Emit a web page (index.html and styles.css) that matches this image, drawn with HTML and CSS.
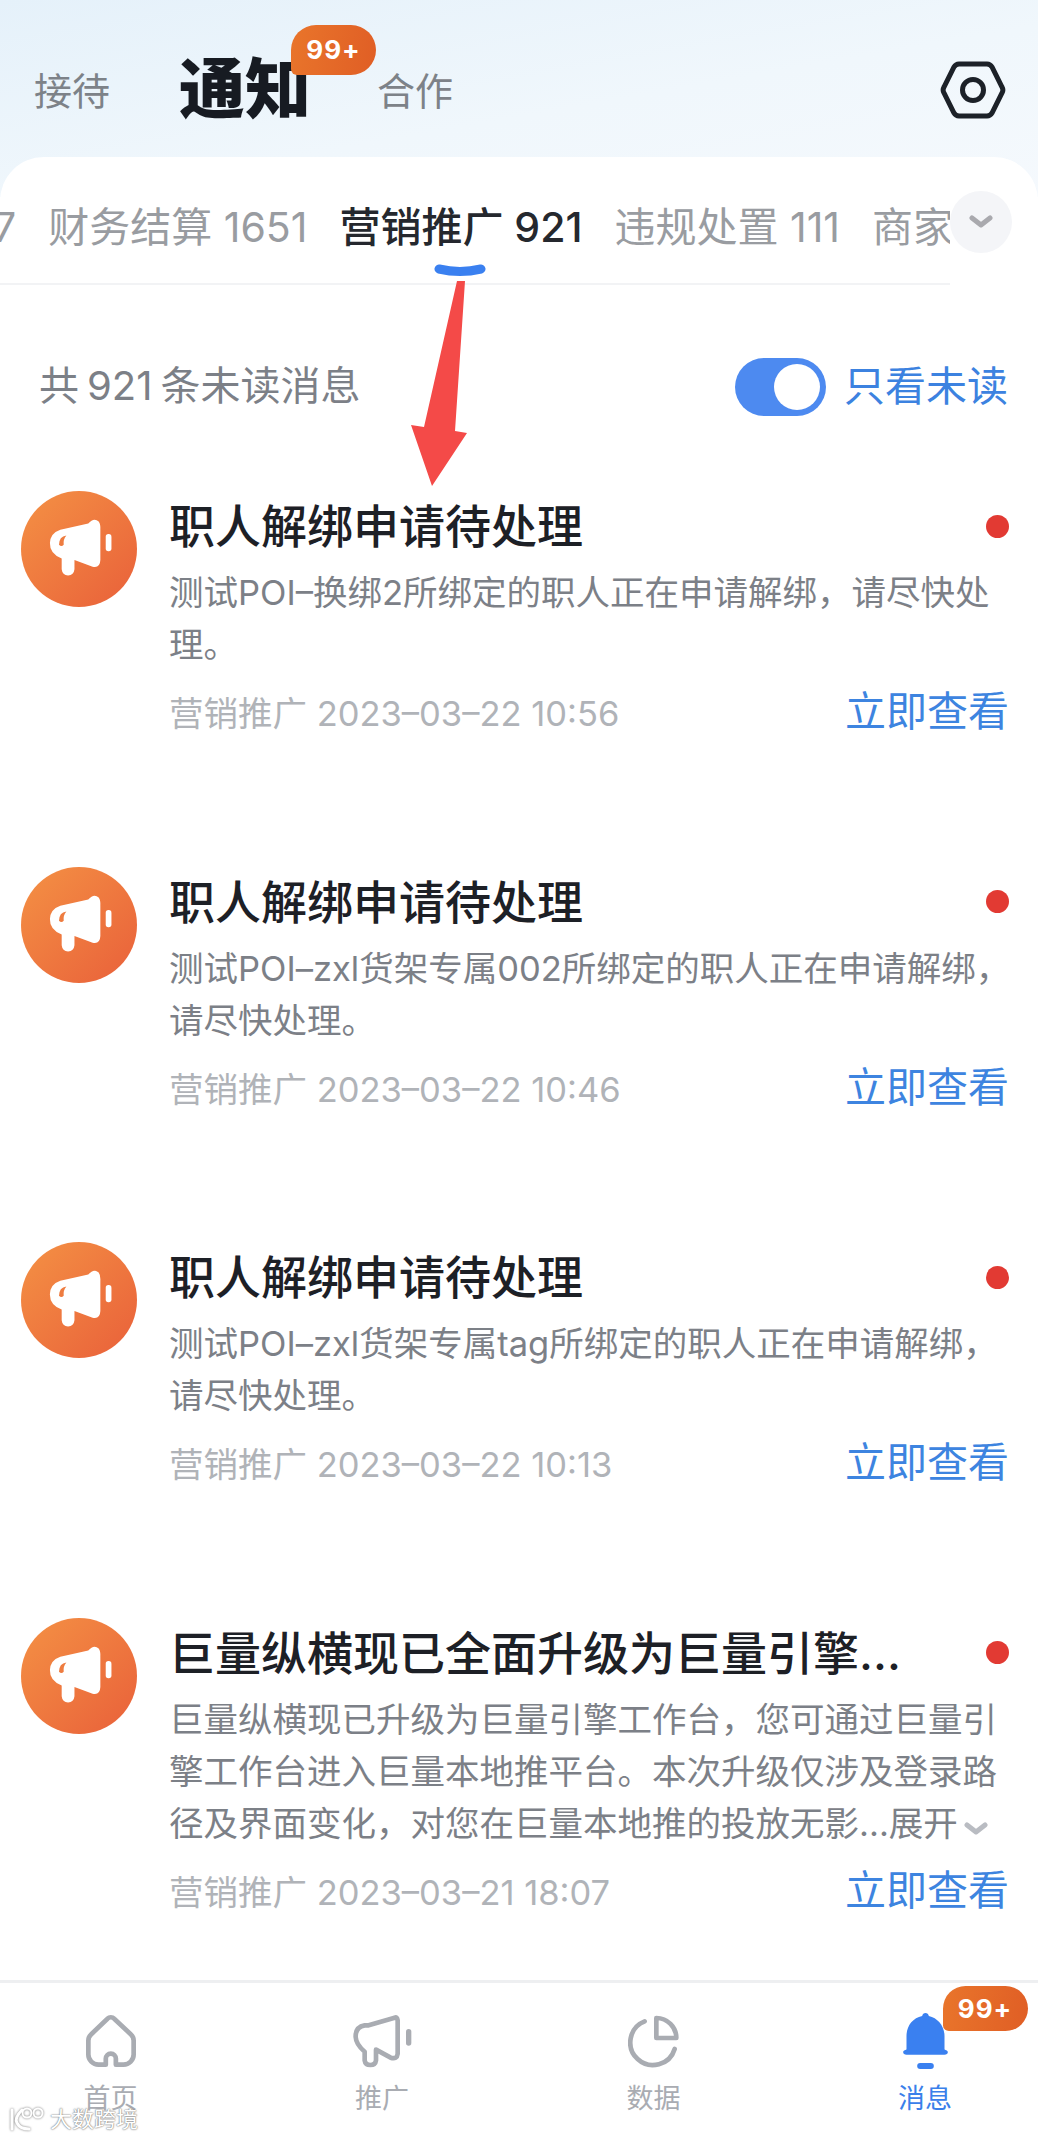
FILE: index.html
```html
<!DOCTYPE html>
<html lang="zh-CN">
<head>
    <meta charset="UTF-8">
    <meta name="viewport" content="width=device-width, initial-scale=1.0">
    <title>通知</title>
    <link rel="stylesheet" href="styles.css">
</head>
<body>
<div class="page">
    <svg class="defs" width="0" height="0">
        <defs>
            <linearGradient id="avatarFill" x1="0" y1="0" x2="1" y2="1">
                <stop offset="0" stop-color="#f49144"/>
                <stop offset="1" stop-color="#e9603a"/>
            </linearGradient>
            <symbol id="avatarIcon" viewBox="65 35 345 345">
                <circle cx="237.5" cy="207.5" r="172.5" fill="url(#avatarFill)"/>
                <path d="M182 150L265 132Q282 112 296 126Q302 134 301 150V240Q300 265 278 260L224 240V268Q222 286 205 286Q188 286 186 268V236Q150 222 151 190Q152 160 182 150Z" fill="#fff"/>
                <path d="M178 195Q178 170 200 167Q190 178 192 195Q185 202 178 195Z" fill="#ee7c40"/>
                <rect x="317" y="163" width="17" height="51" rx="8" fill="#fff"/>
            </symbol>
        </defs>
    </svg>

    <header class="head">
        <nav class="head-tabs">
            <span class="head-tab">接待</span>
            <span class="head-tab head-tab-active">通知<span class="count-badge count-badge-top">99+</span></span>
            <span class="head-tab">合作</span>
        </nav>
        <svg class="settings" viewBox="0 0 66 58" width="66" height="58">
            <path d="M19 3H47a6 6 0 0 1 5 3L62 26a6 6 0 0 1 0 6L52 52a6 6 0 0 1-5 3H19a6 6 0 0 1-5-3L4 32a6 6 0 0 1 0-6L14 6a6 6 0 0 1 5-3Z" fill="none" stroke="#1c2128" stroke-width="5"/>
            <circle cx="33" cy="29" r="10.5" fill="none" stroke="#1c2128" stroke-width="5"/>
        </svg>
    </header>

    <main class="card">
        <div class="cats">
            <div class="cats-scroll">
                <span class="cat cat-cut">7</span>
                <span class="cat">财务结算 1651</span>
                <span class="cat cat-active">营销推广 921
                    <svg class="cat-mark" viewBox="0 0 52 16" width="52" height="16"><path d="M5 6Q26 11 47 6" fill="none" stroke="#3a80f0" stroke-width="9" stroke-linecap="round"/></svg>
                </span>
                <span class="cat">违规处置 111</span>
                <span class="cat">商家</span>
            </div>
            <div class="cats-more">
                <svg viewBox="0 0 24 14" width="24" height="14"><path d="M3 3L12 10L21 3" fill="none" stroke="#a9a9ae" stroke-width="5" stroke-linecap="round" stroke-linejoin="round"/></svg>
            </div>
        </div>

        <div class="filter">
            <span class="filter-count">共<span class="filter-num">921</span>条未读消息</span>
            <div class="filter-right">
                <span class="toggle"><span class="toggle-knob"></span></span>
                <span class="filter-label">只看未读</span>
            </div>
        </div>

        <ul class="list">
            <li class="item">
                <svg class="avatar" width="116" height="116"><use href="#avatarIcon"/></svg>
                <div class="item-body">
                    <div class="item-head">
                        <h2 class="item-title">职人解绑申请待处理</h2>
                        <span class="dot"></span>
                    </div>
                    <p class="item-desc">测试POI–换绑2所绑定的职人正在申请解绑，请尽快处<br>理。</p>
                    <div class="item-foot">
                        <span class="item-meta">营销推广 2023–03–22 10:56</span>
                        <a class="item-link">立即查看</a>
                    </div>
                </div>
            </li>
            <li class="item">
                <svg class="avatar" width="116" height="116"><use href="#avatarIcon"/></svg>
                <div class="item-body">
                    <div class="item-head">
                        <h2 class="item-title">职人解绑申请待处理</h2>
                        <span class="dot"></span>
                    </div>
                    <p class="item-desc">测试POI–zxl货架专属002所绑定的职人正在申请解绑，<br>请尽快处理。</p>
                    <div class="item-foot">
                        <span class="item-meta">营销推广 2023–03–22 10:46</span>
                        <a class="item-link">立即查看</a>
                    </div>
                </div>
            </li>
            <li class="item">
                <svg class="avatar" width="116" height="116"><use href="#avatarIcon"/></svg>
                <div class="item-body">
                    <div class="item-head">
                        <h2 class="item-title">职人解绑申请待处理</h2>
                        <span class="dot"></span>
                    </div>
                    <p class="item-desc">测试POI–zxl货架专属tag所绑定的职人正在申请解绑，<br>请尽快处理。</p>
                    <div class="item-foot">
                        <span class="item-meta">营销推广 2023–03–22 10:13</span>
                        <a class="item-link">立即查看</a>
                    </div>
                </div>
            </li>
            <li class="item">
                <svg class="avatar" width="116" height="116"><use href="#avatarIcon"/></svg>
                <div class="item-body">
                    <div class="item-head">
                        <h2 class="item-title">巨量纵横现已全面升级为巨量引擎...</h2>
                        <span class="dot"></span>
                    </div>
                    <p class="item-desc">巨量纵横现已升级为巨量引擎工作台，您可通过巨量引<br>擎工作台进入巨量本地推平台。本次升级仅涉及登录路<br>径及界面变化，对您在巨量本地推的投放无影...展开<svg class="desc-more" viewBox="0 0 24 14" width="24" height="14"><path d="M3 3L12 10L21 3" fill="none" stroke="#b9bcc2" stroke-width="5" stroke-linecap="round" stroke-linejoin="round"/></svg></p>
                    <div class="item-foot">
                        <span class="item-meta">营销推广 2023–03–21 18:07</span>
                        <a class="item-link">立即查看</a>
                    </div>
                </div>
            </li>
        </ul>
    </main>

    <footer class="tabbar">
        <div class="tabbar-item">
            <svg viewBox="48 38 149 155" width="50" height="52"><path d="M112 49a14 14 0 0 1 20 0L182 96a24 24 0 0 1 8 18V156a30 30 0 0 1-30 30H137V168a15 15 0 0 0-30 0V186H85a30 30 0 0 1-30-30V114a24 24 0 0 1 8-18Z" fill="none" stroke="#a9acb2" stroke-width="14" stroke-linejoin="round"/></svg>
            <span>首页</span>
        </div>
        <div class="tabbar-item">
            <svg viewBox="853 35 177 158" width="59" height="52"><path d="M978 44L900 67H888Q860 72 861 102Q862 124 888 146V172Q890 186 905 186Q920 186 922 172V140L966 164Q985 170 987 152V52Q985 40 978 44Z" fill="none" stroke="#a9acb2" stroke-width="14" stroke-linejoin="round"/><rect x="1012" y="78" width="16" height="50" rx="8" fill="#a9acb2"/></svg>
            <span>推广</span>
        </div>
        <div class="tabbar-item">
            <svg viewBox="55 118 153 152" width="51" height="51"><path d="M105 135A68 68 0 1 0 195 218" fill="none" stroke="#a9acb2" stroke-width="14" stroke-linecap="round"/><path d="M140 125V185H200A60 60 0 0 0 140 125Z" fill="none" stroke="#a9acb2" stroke-width="14" stroke-linejoin="round"/></svg>
            <span>数据</span>
        </div>
        <div class="tabbar-item tabbar-item-active">
            <svg viewBox="878 120 134 168" width="45" height="56"><path d="M945 120c5 0 9 3 10 9 27 6 47 30 47 60v40c0 2 10 2 10 9 0 5-4 7-10 7H888c-6 0-10-2-10-7 0-7 10-7 10-9v-40c0-30 18-54 47-60 1-6 5-9 10-9Z" fill="#3a80f0"/><rect x="920" y="270" width="50" height="18" rx="9" fill="#3a80f0"/></svg>
            <span>消息</span>
            <span class="count-badge count-badge-tab">99+</span>
        </div>
    </footer>

    <!-- annotation drawn over the screenshot -->
    <svg class="arrow" viewBox="0 0 60 206" width="60" height="206">
        <path d="M46 0H54L44 150L56 152L21 205L0 144L13 146Z" fill="#f44a48"/>
    </svg>

    <div class="watermark">
        <svg viewBox="0 0 36 26" width="36" height="26">
            <path d="M3 4V23M13 4Q5 12 8 17Q11 23 20 23" fill="none" stroke="#fff" stroke-width="3" stroke-linecap="round"/>
            <circle cx="18" cy="7" r="4.5" fill="none" stroke="#fff" stroke-width="2"/>
            <circle cx="29" cy="7" r="4.5" fill="none" stroke="#fff" stroke-width="2"/>
        </svg>
        <span>大数跨境</span>
    </div>
</div>
</body>
</html>
```

FILE: styles.css
```css
* {
    box-sizing: border-box;
}

body {
    margin: 0;
    padding: 0;
    background-color: #fff;
    font-family: Inter, "Noto Sans CJK SC", sans-serif;
    overflow: hidden;
}

.page {
    position: relative;
    display: flex;
    flex-direction: column;
    width: 1038px;
    height: 2139px;
    overflow: hidden;
}

.defs {
    position: absolute;
}

/* top area */
.head {
    flex-shrink: 0;
    height: 197px;
    padding: 0 32px 40px 34px;
    display: flex;
    align-items: center;
    justify-content: space-between;
    background: linear-gradient(170deg, #e5f1fa 0%, #f0f7fc 55%, #f5f9fd 100%);
}

.head-tabs {
    display: flex;
    align-items: center;
    gap: 66px;
    padding-top: 20px;
}

.head-tab {
    font-size: 38px;
    color: #7d8288;
    position: relative;
}

.head-tab-active {
    margin-left: 3px;
    font-size: 66px;
    font-weight: 900;
    color: #171b22;
    line-height: 76px;
}

.settings {
    margin-top: 22px;
}

.count-badge {
    position: absolute;
    display: flex;
    align-items: center;
    justify-content: center;
    width: 85px;
    background: linear-gradient(100deg, #e9752b, #e05e25);
    color: #fff;
    font-family: Inter, sans-serif;
    font-size: 26px;
    font-weight: 700;
    letter-spacing: 1px;
}

.count-badge-top {
    height: 50px;
    left: 112px;
    top: -26px;
    border-radius: 25px 25px 25px 6px;
}

.count-badge-tab {
    height: 45px;
    left: 128px;
    top: -27px;
    border-radius: 23px 23px 23px 6px;
}

/* white card */
.card {
    flex: 1;
    min-height: 0;
    margin-top: -40px;
    background-color: #fff;
    border-radius: 44px 44px 0 0;
}

.cats {
    display: flex;
    align-items: flex-start;
    height: 128px;
}

.cats-scroll {
    width: 950px;
    height: 128px;
    border-bottom: 2px solid #f2f3f5;
    display: flex;
    gap: 32px;
    overflow: hidden;
    white-space: nowrap;
    padding-top: 42px;
}

.cat {
    font-size: 41px;
    line-height: 56px;
    color: #999ca1;
    position: relative;
    flex-shrink: 0;
}

.cat-cut {
    margin-left: -7px;
}

.cat-active {
    color: #25282e;
    font-weight: 500;
}

.cat-mark {
    position: absolute;
    left: 95px;
    top: 64px;
}

.cats-more {
    width: 62px;
    height: 62px;
    margin-top: 34px;
    border-radius: 50%;
    background-color: #f4f5f8;
    display: flex;
    align-items: center;
    justify-content: center;
}

.filter {
    display: flex;
    align-items: center;
    justify-content: space-between;
    height: 58px;
    margin-top: 73px;
    padding: 0 30px 0 39px;
}

.filter-count {
    font-size: 40px;
    color: #7c8087;
    padding-bottom: 8px;
}

.filter-num {
    margin: 0 8px;
}

.filter-right {
    display: flex;
    align-items: center;
    gap: 18px;
}

.filter-label {
    font-size: 41px;
    color: #3c82e0;
    padding-bottom: 8px;
}

.toggle {
    width: 91px;
    height: 58px;
    border-radius: 29px;
    background-color: #4d8af0;
    display: flex;
    align-items: center;
    justify-content: flex-end;
    padding-right: 6px;
}

.toggle-knob {
    width: 46px;
    height: 46px;
    border-radius: 50%;
    background-color: #fff;
}

/* message list */
.list {
    list-style: none;
    margin: 75px 0 0;
    padding: 0;
}

.item {
    display: flex;
    gap: 32px;
    padding: 0 29px 0 21px;
    margin-bottom: 130.5px;
}

.avatar {
    flex-shrink: 0;
}

.item-body {
    flex: 1;
    min-width: 0;
}

.item-head {
    display: flex;
    align-items: center;
    justify-content: space-between;
    height: 70px;
}

.item-title {
    margin: 0;
    font-size: 46px;
    line-height: 66px;
    font-weight: 500;
    color: #1d2026;
}

.dot {
    width: 23px;
    height: 23px;
    border-radius: 50%;
    background-color: #e23a33;
    flex-shrink: 0;
}

.item-desc {
    margin: 6px 0 0;
    font-size: 34.5px;
    line-height: 52px;
    color: #7c8087;
    white-space: nowrap;
}

.desc-more {
    margin-left: 6px;
}

.item-foot {
    display: flex;
    align-items: center;
    justify-content: space-between;
    height: 56px;
    margin-top: 9px;
}

.item-meta {
    font-size: 34.5px;
    color: #b0b3b8;
    padding-top: 6px;
}

.item-link {
    font-size: 41px;
    color: #3d84e0;
}

/* bottom bar */
.tabbar {
    flex-shrink: 0;
    height: 159px;
    border-top: 3px solid #eeeff1;
    display: flex;
    gap: 50.5px;
    padding-top: 30px;
    position: relative;
}

.tabbar-item {
    position: relative;
    width: 221px;
    height: 120px;
    display: flex;
    flex-direction: column;
    align-items: center;
    font-size: 27px;
    color: #a9acb2;
}

.tabbar-item svg {
    height: 56px;
    flex-shrink: 0;
}

.tabbar-item span {
    line-height: 40px;
    margin-top: 10px;
}

.tabbar-item .count-badge {
    margin-top: 0;
    line-height: 1;
}

.tabbar-item-active {
    color: #3a80ea;
}

/* overlays from the screenshot */
.arrow {
    position: absolute;
    left: 411px;
    top: 281px;
}

.watermark {
    position: absolute;
    left: 9px;
    top: 2106px;
    display: flex;
    align-items: center;
    gap: 5px;
    color: #fff;
    font-size: 22px;
    line-height: 26px;
    text-shadow: 0 0 2px #777, 0 0 1px #777;
}

.watermark svg {
    filter: drop-shadow(0 0 1px #777);
}
```
